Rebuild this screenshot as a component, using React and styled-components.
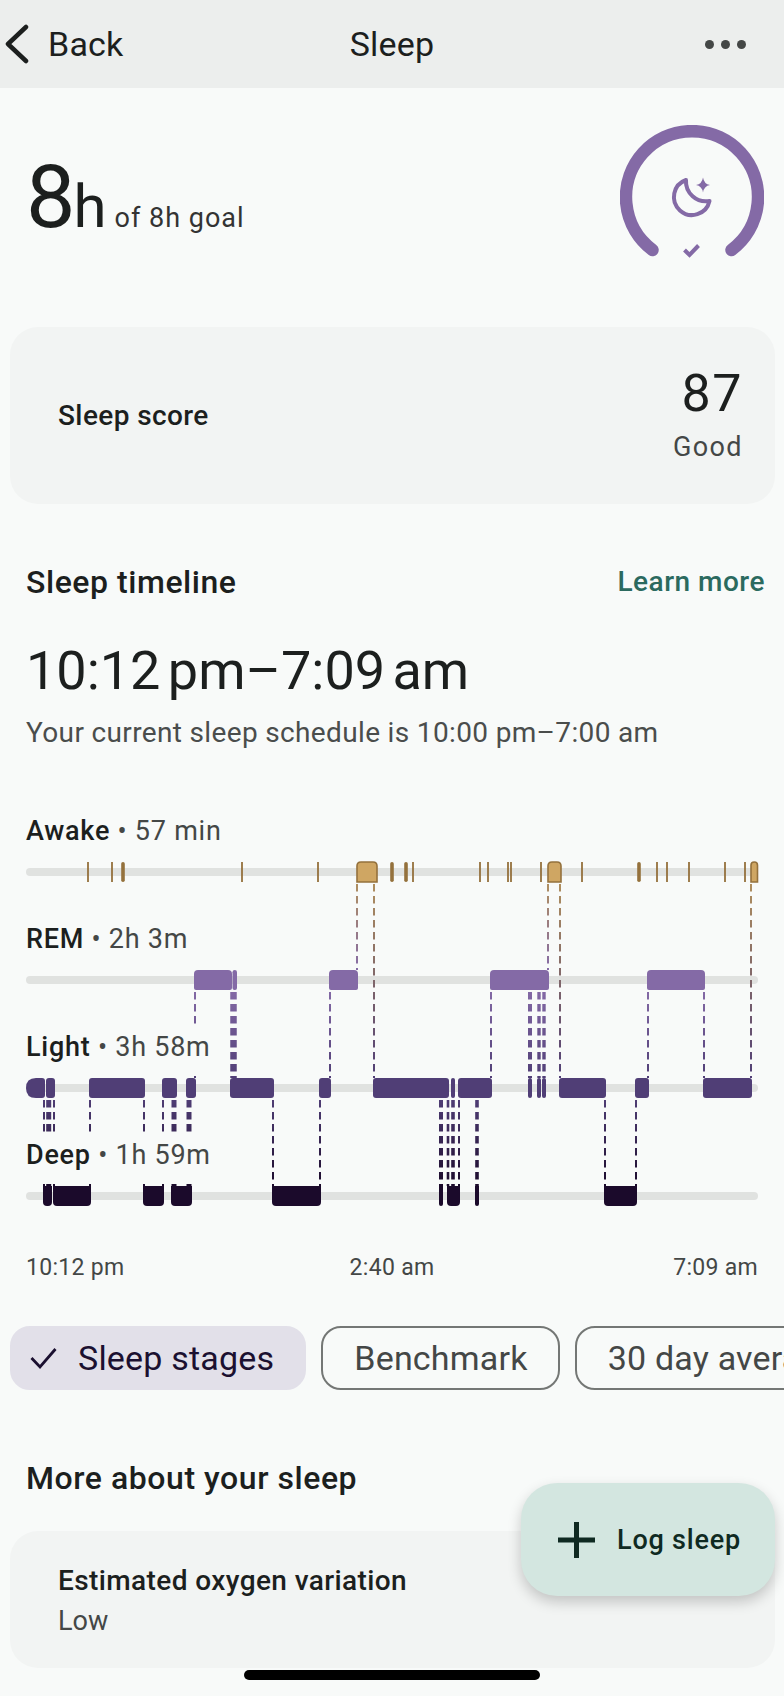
import styled, { createGlobalStyle } from 'styled-components';

const GlobalStyle = createGlobalStyle`
  * {
    box-sizing: border-box;
  }
  html, body {
    margin: 0;
    padding: 0;
    background: #f8faf9;
    font-family: Roboto, "Noto Sans", sans-serif;
    color: #1c1f1e;
  }
`;

const Page = styled.div`
  position: relative;
  width: 784px;
  height: 1696px;
  overflow: hidden;
  background: #f8faf9;
`;

const TopBar = styled.header`
  display: grid;
  grid-template-columns: 1fr auto 1fr;
  align-items: center;
  height: 88px;
  background: #eceeed;
  font-size: 34px;
  letter-spacing: 0.2px;
`;

const BackLink = styled.div`
  display: flex;
  align-items: center;
  gap: 19px;
  padding-left: 5px;
`;

const MoreDots = styled.div`
  justify-self: end;
  display: flex;
  gap: 7px;
  padding-right: 38px;
  span {
    width: 9px;
    height: 9px;
    border-radius: 50%;
    background: #444746;
  }
`;

const Summary = styled.section`
  display: flex;
  justify-content: space-between;
  align-items: flex-start;
  height: 239px;
  padding: 37px 20px 0 26px;
`;

const Duration = styled.div`
  display: flex;
  align-items: baseline;
  margin-top: 22px;
  font-size: 88px;
  line-height: 100px;
  letter-spacing: -2px;
  small {
    font-size: 60px;
    letter-spacing: 0;
  }
  em {
    margin-left: 8px;
    font-style: normal;
    font-size: 27px;
    letter-spacing: 1px;
    color: #333;
  }
`;

const ScoreCard = styled.section`
  display: flex;
  justify-content: space-between;
  align-items: center;
  height: 177px;
  margin: 0 9px 0 10px;
  padding: 0 32px 0 48px;
  background: #f2f4f3;
  border-radius: 28px;
`;

const CardLabel = styled.div`
  font-size: 28px;
  font-weight: 500;
  letter-spacing: 0.4px;
`;

const ScoreValue = styled.div`
  text-align: right;
  font-size: 52px;
  line-height: 62px;
  letter-spacing: 1.5px;
  small {
    display: block;
    font-size: 27px;
    line-height: 44px;
    letter-spacing: 1.4px;
    color: #444746;
  }
`;

const TimelineHead = styled.div`
  display: flex;
  justify-content: space-between;
  align-items: center;
  margin-top: 59px;
  padding: 0 19px 0 26px;
  height: 38px;
`;

const SectionTitle = styled.h2`
  margin: 0;
  font-size: 32px;
  font-weight: 500;
  letter-spacing: 0.55px;
`;

const LearnMore = styled.span`
  margin-top: -2px;
  font-size: 28px;
  font-weight: 500;
  letter-spacing: 0.5px;
  color: #2b6a5f;
`;

const TimeRange = styled.div`
  margin: 36px 0 0 26px;
  font-size: 54px;
  line-height: 68px;
  word-spacing: -6px;
`;

const Schedule = styled.div`
  margin: 10px 0 0 26px;
  font-size: 28px;
  line-height: 36px;
  letter-spacing: 0.35px;
  color: #4a4d4c;
`;

const Chart = styled.div`
  position: relative;
  height: 423px;
  margin-top: 57px;
`;

const ChartDrawing = styled.svg`
  position: absolute;
  inset: 0;
`;

const StageRow = styled.div`
  position: relative;
  height: 108px;
`;

const StageLabel = styled.div`
  display: inline-block;
  height: 50px;
  margin-left: 26px;
  font-size: 27px;
  line-height: 46px;
  letter-spacing: 0.75px;
  background: #f8faf9;
  color: #444746;
  b {
    font-weight: 500;
    color: #1c1f1e;
  }
`;

const Axis = styled.div`
  display: grid;
  grid-template-columns: 1fr auto 1fr;
  margin-top: 22px;
  padding: 0 26px;
  font-size: 23px;
  line-height: 30px;
  letter-spacing: 0.3px;
  color: #444746;
  span:last-child {
    text-align: right;
  }
`;

const Chips = styled.div`
  display: flex;
  gap: 15px;
  margin-top: 43px;
  padding-left: 10px;
  overflow: hidden;
`;

const Chip = styled.div`
  flex: none;
  display: flex;
  align-items: center;
  gap: 21px;
  height: 64px;
  padding: ${({ $selected }) => ($selected ? '0 30px 0 18px' : '0 30px 0 31px')};
  border-radius: 20px;
  border: 2px solid ${({ $selected }) => ($selected ? '#e2e0e9' : '#747775')};
  background: ${({ $selected }) => ($selected ? '#e2e0e9' : 'transparent')};
  color: ${({ $selected }) => ($selected ? '#1b1030' : '#444746')};
  font-size: 34px;
  letter-spacing: 0.2px;
`;

const MoreTitle = styled(SectionTitle)`
  margin: 69px 0 0 26px;
  line-height: 38px;
`;

const InfoCard = styled.section`
  margin: 34px 9px 0 10px;
  height: 137px;
  padding: 30px 48px;
  background: #f2f4f3;
  border-radius: 28px;
  line-height: 40px;
  small {
    display: block;
    font-size: 27px;
    color: #444746;
  }
`;

const LogButton = styled.div`
  position: absolute;
  left: 521px;
  top: 1483px;
  width: 254px;
  height: 113px;
  display: flex;
  align-items: center;
  gap: 22px;
  padding-left: 37px;
  border-radius: 36px;
  background: #d3e6e0;
  box-shadow: 0 6px 14px rgba(0, 0, 0, 0.2);
  font-size: 27px;
  font-weight: 500;
  letter-spacing: 0.8px;
  color: #0f2a22;
`;

const HomeBar = styled.div`
  position: absolute;
  left: 244px;
  top: 1670px;
  width: 296px;
  height: 10px;
  border-radius: 5px;
  background: #000;
`;

const AWAKE = '#cfa663';
const AWAKE_EDGE = '#94713c';
const REM = '#846aa6';
const LIGHT = '#503e76';
const DEEP = '#1b0a2b';

const trackYs = [873, 981, 1089, 1197];

const awakeTicks = [
  [88, 1.8], [112, 1.8], [123, 3.6], [242, 1.8], [318, 1.8], [392, 3.6], [406, 3.6], [413, 1.8],
  [480, 1.8], [488, 1.8], [508, 1.8], [511, 1.8], [541, 1.8], [582, 1.8], [639, 3.6], [657, 1.8],
  [667, 1.8], [689, 1.8], [725, 1.8], [745, 1.8],
];
const awakeBlocks = [[357, 377], [548, 561], [751, 757.5]];

const remBars = [[194, 232], [232.5, 237], [329, 358], [490, 549], [647, 705]];
const lightBars = [
  [26, 45, 10], [46, 55], [89, 145], [162, 177], [186, 196], [230, 274], [319, 331],
  [373, 449], [451, 455], [458, 492], [528, 532], [537, 541], [542, 546], [559, 606],
  [635, 649], [703, 752],
];
const deepBars = [
  [43, 52], [53, 91], [143, 164], [171, 192], [272, 321], [439, 443], [447, 460], [475, 479], [604, 637],
];

// x, width, first dash, end, gradient
const links = [
  [357, 2, 885, 971, 'awakeRem'],
  [374, 2, 885, 1079, 'awakeLight'],
  [548, 2, 885, 971, 'awakeRem'],
  [560, 2, 885, 1079, 'awakeLight'],
  [751, 2, 885, 1079, 'awakeLight'],
  [195, 2, 993, 1079, 'remLight'],
  [233.5, 6.5, 993, 1079, 'remLight'],
  [330, 2, 993, 1079, 'remLight'],
  [491, 2, 993, 1079, 'remLight'],
  [530, 4, 993, 1079, 'remLight'],
  [539, 3.4, 993, 1079, 'remLight'],
  [544, 3.4, 993, 1079, 'remLight'],
  [648, 2, 993, 1079, 'remLight'],
  [704, 2, 993, 1079, 'remLight'],
  [44, 2, 1101, 1187, 'lightDeep'],
  [48.7, 5, 1101, 1187, 'lightDeep'],
  [54, 2, 1101, 1187, 'lightDeep'],
  [90, 2, 1101, 1187, 'lightDeep'],
  [144, 2, 1101, 1187, 'lightDeep'],
  [163, 2, 1101, 1187, 'lightDeep'],
  [174, 5, 1101, 1187, 'lightDeep'],
  [189, 5, 1101, 1187, 'lightDeep'],
  [273, 2, 1101, 1187, 'lightDeep'],
  [320, 2, 1101, 1187, 'lightDeep'],
  [441, 4, 1101, 1187, 'lightDeep'],
  [448, 2.6, 1101, 1187, 'lightDeep'],
  [453, 3.6, 1101, 1187, 'lightDeep'],
  [459, 2, 1101, 1187, 'lightDeep'],
  [477, 3.6, 1101, 1187, 'lightDeep'],
  [605, 2, 1101, 1187, 'lightDeep'],
  [636, 2, 1101, 1187, 'lightDeep'],
];

const gradients = [
  ['awakeRem', 883, 971, '#b08f5e', '#846aa6'],
  ['awakeLight', 883, 1079, '#b08f5e', '#503e76'],
  ['remLight', 991, 1079, '#846aa6', '#503e76'],
  ['lightDeep', 1099, 1187, '#503e76', '#1b0a2b'],
];

// a bar with its own top and bottom corner radius, the left side may differ
const barPath = (x1, x2, y, rt, rb, left) => {
  const h = 20;
  const max = (x2 - x1) / 2;
  const t = Math.min(rt, max);
  const b = Math.min(rb, max);
  const lt = left ?? t;
  const lb = left ?? b;
  return `M${x1} ${y + lt}Q${x1} ${y} ${x1 + lt} ${y}H${x2 - t}Q${x2} ${y} ${x2} ${y + t}V${y + h - b}Q${x2} ${y + h} ${x2 - b} ${y + h}H${x1 + lb}Q${x1} ${y + h} ${x1} ${y + h - lb}Z`;
};

const SleepChart = () => (
  <ChartDrawing width="784" height="423" viewBox="0 809 784 423">
    <defs>
      {gradients.map(([id, y1, y2, from, to]) => (
        <linearGradient key={id} id={id} gradientUnits="userSpaceOnUse" x1="0" x2="0" y1={y1} y2={y2}>
          <stop offset="0" stopColor={from} />
          <stop offset="1" stopColor={to} />
        </linearGradient>
      ))}
    </defs>
    {trackYs.map((y) => (
      <rect key={y} x="26" y={y - 4} width="732" height="8" rx="4" fill="#e0e2e0" />
    ))}
    {links.map(([x, w, y1, y2, grad]) => (
      <line key={`${x}-${y1}`} x1={x} x2={x} y1={y1} y2={y2} stroke={`url(#${grad})`} strokeWidth={w} strokeDasharray="7.5 4.5" />
    ))}
    {awakeTicks.map(([x, w]) => (
      <rect key={x} x={x - w / 2} y="863" width={w} height="20" rx={w > 3 ? 1.8 : 0} fill={AWAKE_EDGE} />
    ))}
    {awakeBlocks.map(([x1, x2]) => (
      <path key={x1} d={barPath(x1, x2, 863, 4, 0)} fill={AWAKE} stroke={AWAKE_EDGE} strokeWidth="1.6" />
    ))}
    {remBars.map(([x1, x2]) => (
      <path key={x1} d={barPath(x1, x2, 971, 4, 2)} fill={REM} />
    ))}
    {lightBars.map(([x1, x2, left]) => (
      <path key={x1} d={barPath(x1, x2, 1079, 3, 3, left)} fill={LIGHT} />
    ))}
    {deepBars.map(([x1, x2]) => (
      <path key={x1} d={barPath(x1, x2, 1187, 0, 4)} fill={DEEP} />
    ))}
  </ChartDrawing>
);

const SleepRing = () => (
  <svg width="144" height="144" viewBox="620 125 144 144">
    <path d="M652.5 250A66 66 0 1 1 731.5 250" fill="none" stroke="#846aa6" strokeWidth="12.5" strokeLinecap="round" />
    <path d="M686 180A18 18 0 1 0 709.5 201A20 20 0 0 1 686 180Z" fill="none" stroke="#846aa6" strokeWidth="4" strokeLinejoin="round" />
    <path d="M703 177.5q1 6.5 7 7.5q-6 1 -7 7.5q-1 -6.5 -7 -7.5q6 -1 7 -7.5Z" fill="#846aa6" />
    <path d="M684.5 250l5 5l9 -9.5" fill="none" stroke="#846aa6" strokeWidth="4" />
  </svg>
);

const App = () => (
  <Page>
    <GlobalStyle />
    <TopBar>
      <BackLink>
        <svg width="24" height="40" viewBox="0 0 24 40">
          <path d="M21 3L3 20l18 17" fill="none" stroke="#1c1f1e" strokeWidth="4.5" strokeLinecap="round" strokeLinejoin="round" />
        </svg>
        Back
      </BackLink>
      <div>Sleep</div>
      <MoreDots><span /><span /><span /></MoreDots>
    </TopBar>
    <Summary>
      <Duration>8<small>h</small><em>of 8h goal</em></Duration>
      <SleepRing />
    </Summary>
    <ScoreCard>
      <CardLabel>Sleep score</CardLabel>
      <ScoreValue>87<small>Good</small></ScoreValue>
    </ScoreCard>
    <TimelineHead>
      <SectionTitle>Sleep timeline</SectionTitle>
      <LearnMore>Learn more</LearnMore>
    </TimelineHead>
    <TimeRange>10:12 pm–7:09 am</TimeRange>
    <Schedule>Your current sleep schedule is 10:00 pm–7:00 am</Schedule>
    <Chart>
      <SleepChart />
      <StageRow><StageLabel><b>Awake</b> • 57 min</StageLabel></StageRow>
      <StageRow><StageLabel><b>REM</b> • 2h 3m</StageLabel></StageRow>
      <StageRow><StageLabel><b>Light</b> • 3h 58m</StageLabel></StageRow>
      <StageRow><StageLabel><b>Deep</b> • 1h 59m</StageLabel></StageRow>
    </Chart>
    <Axis>
      <span>10:12 pm</span>
      <span>2:40 am</span>
      <span>7:09 am</span>
    </Axis>
    <Chips>
      <Chip $selected>
        <svg width="27" height="24" viewBox="0 0 27 24">
          <path d="M1.5 12l8.5 9L25.5 3" fill="none" stroke="#1b1030" strokeWidth="2.8" />
        </svg>
        Sleep stages
      </Chip>
      <Chip>Benchmark</Chip>
      <Chip>30 day average</Chip>
    </Chips>
    <MoreTitle>More about your sleep</MoreTitle>
    <InfoCard>
      <CardLabel>Estimated oxygen variation</CardLabel>
      <small>Low</small>
    </InfoCard>
    <LogButton>
      <svg width="37" height="36" viewBox="0 0 37 36">
        <path d="M18.5 0v36M0 18h37" stroke="#0f2a22" strokeWidth="5" />
      </svg>
      Log sleep
    </LogButton>
    <HomeBar />
  </Page>
);

export default App;
